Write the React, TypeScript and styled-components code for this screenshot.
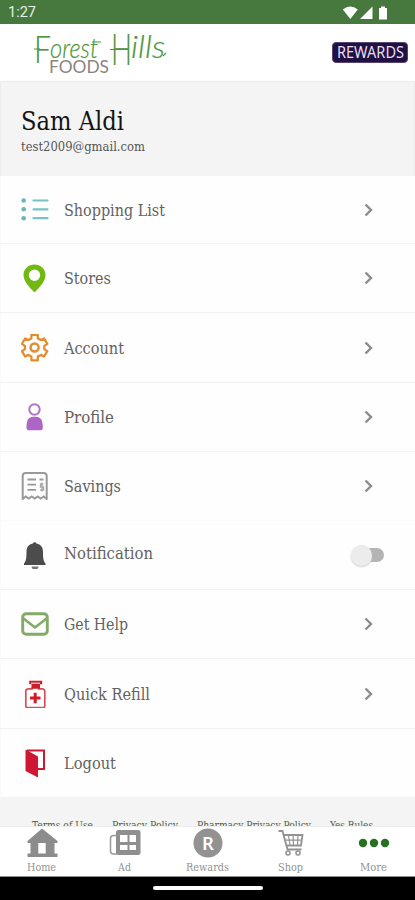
import React from "react";
import styled, { createGlobalStyle } from "styled-components";

const Global = createGlobalStyle`
  * { box-sizing: border-box; }
  body { margin: 0; background: #000; }
`;

const slab = `"DejaVu Serif Condensed", "DejaVu Serif", serif`;

const Screen = styled.div`
  width: 415px;
  height: 900px;
  display: flex;
  flex-direction: column;
  overflow: hidden;
  background: #fefefe;
  font-family: ${slab};
`;

const StatusBar = styled.div`
  height: 24px;
  flex: none;
  display: flex;
  align-items: center;
  justify-content: space-between;
  padding: 2px 26px 0 8px;
  background: #47783d;
  color: #e8f0e5;
  font: 400 14.5px/20px Roboto, sans-serif;
`;

const Header = styled.header`
  height: 57px;
  flex: none;
  display: flex;
  align-items: flex-start;
  justify-content: space-between;
  padding: 4px 7px 0 32px;
  background: #fff;
`;

const RewardsBadge = styled.div`
  width: 76px;
  height: 21px;
  margin-top: 14px;
  display: flex;
  align-items: center;
  justify-content: center;
  border: 1px solid #56456f;
  border-radius: 4px;
  background: #211044;
`;

const UserPanel = styled.section`
  height: 95px;
  flex: none;
  padding: 20px 21px 0 20px;
  background: #f4f4f4;
  border: solid #ececec;
  border-width: 1px 1px 0 1px;
`;

const Fit = styled.svg`
  display: block;
  flex: none;
  overflow: visible;
`;

const Menu = styled.div`
  height: 622px;
  flex: none;
  display: grid;
  grid-template-rows: 68px 69px 70px 69px 69px 69px 69px 70px 69px;
`;

const Row = styled.div<{ $faint?: boolean }>`
  display: flex;
  align-items: center;
  padding: 0 31px 0 21px;
  background: #fefefe;
  border-left: 1px solid #fafafa;
  border-bottom: 1px solid ${(p) => (p.$faint ? "#fbfbfb" : "#f2f2f2")};
`;

const IconSlot = styled.div`
  width: 28px;
  height: 28px;
  flex: none;
  margin-left: -1px;
  margin-right: 15px;
  svg { display: block; }
`;

const Label = styled.div<{ $raise?: boolean }>`
  flex: 1;
  margin-top: ${(p) => (p.$raise ? "-4px" : "0")};
`;

const Chevron = styled.svg`
  width: 10px;
  height: 14px;
  margin-right: 10px;
`;

const Toggle = styled.div`
  width: 33px;
  height: 22px;
  display: flex;
  align-items: center;
  &::before {
    content: "";
    width: 21px;
    height: 21px;
    flex: none;
    border-radius: 50%;
    background: #ececec;
    box-shadow: 0 1px 2px #ccc;
    z-index: 1;
  }
  &::after {
    content: "";
    width: 22px;
    height: 14px;
    flex: none;
    margin-left: -10px;
    border-radius: 7px;
    background: #b4b4b4;
  }
`;

const Links = styled.div`
  height: 28px;
  flex: none;
  display: flex;
  gap: 19px;
  padding: 20px 0 0 32px;
  overflow: hidden;
  background: #f4f4f4;
`;

const Tabs = styled.nav`
  height: 51px;
  flex: none;
  display: grid;
  grid-template-columns: repeat(5, 83px);
  background: #fff;
  border-top: 1px solid #ededed;
  border-bottom: 1px solid #8d8d8d;
`;

const Tab = styled.div`
  display: flex;
  flex-direction: column;
  align-items: center;
  justify-content: space-between;
  padding-bottom: 2px;
`;

const GestureBar = styled.div`
  flex: 1;
  padding-top: 9px;
  background: #000;
  &::before {
    content: "";
    display: block;
    width: 110px;
    height: 4px;
    margin: 0 auto;
    border-radius: 2px;
    background: #fff;
  }
`;

type FitProps = { text: string; width: number; size: number; color: string; family?: string; height?: number; weight?: number };

const FitText = ({ text, width, size, color, family = slab, height = size * 1.25, weight = 400 }: FitProps) => (
  <Fit width={width} height={height}>
    <text x="0" y={height * 0.78} fontFamily={family} fontSize={size} fontWeight={weight} fill={color} textLength={width} lengthAdjust="spacingAndGlyphs">
      {text}
    </text>
  </Fit>
);

const Svg = ({ children }: { children: React.ReactNode }) => (
  <svg width="28" height="28" viewBox="0 0 28 28" fill="none">{children}</svg>
);

const ListIcon = () => (
  <Svg>
    <g stroke="#78c1c4" strokeWidth="2.2" strokeLinecap="round"><path d="M12.500 4.500H26.500M12.500 13.300H26.500M12.500 22.200H26.500" /></g>
    <g fill="#68b6ba"><circle cx="2.700" cy="4.500" r="2.300" /><circle cx="2.700" cy="13.300" r="2.300" /><circle cx="2.700" cy="22.200" r="2.300" /></g>
  </Svg>
);

const PinIcon = () => (
  <Svg><path fillRule="evenodd" fill="#70b913" d="M13.500 .5C7.500.5 2.500 5 2.500 11c0 6.500 6 12.500 11 17.500 5-5 11-11 11-17.500C24.500 5 19.500.5 13.500.5Zm0 5.100a5.700 5.700 0 1 1 0 11.400a5.700 5.700 0 0 1 0-11.400Z" /></Svg>
);

const GearIcon = () => (
  <Svg>
    <g transform="translate(-.4 -.5)" stroke="#e58c2d">
      <path strokeWidth="2.300" strokeLinejoin="round" d="M10.800 1.300h6.400v3.600l3.100 1.700 3.200-1.600 3.200 5.400-3 2.100v3.100l3 2.100-3.200 5.300-3.200-1.600-3.100 1.700v3.700h-6.400v-3.700l-3.100-1.700L4.500 23l-3.200-5.300 3-2.100v-3.100l-3-2.100L4.500 5l3.200 1.600 3.100-1.700Z" />
      <circle cx="14" cy="14" r="4" strokeWidth="2.500" />
    </g>
  </Svg>
);

const ProfileIcon = () => (
  <Svg>
    <circle cx="13.500" cy="6.500" r="5.200" stroke="#b374c8" strokeWidth="2" />
    <path fill="#ad66c5" d="M5.500 24.500c0-7.500 2.200-10.800 6.500-10.800h3.200c4.300 0 6.600 3.300 6.600 10.800 0 1.900-.8 2.800-2.500 2.800H8c-1.700 0-2.500-.9-2.500-2.800Z" />
  </Svg>
);

const ReceiptIcon = () => (
  <Svg>
    <path stroke="#999" strokeWidth="2" d="M1.700 27V4c0-2 1-3 3-3h18c2 0 3 1 3 3v23l-3-2.500-3 2-3-2-3 2-3-2-3 2-3-2Z" />
    <path stroke="#999" strokeWidth="1.800" d="M6.500 7.500h8.500M6.500 12.700h8.500M6.500 17.800h8.500M18.500 7.500h4" />
    <path stroke="#aaa" strokeWidth="1.400" d="M22.500 12h-3v3h3v3h-3.500M21 10.500v9" />
  </Svg>
);

const BellIcon = () => (
  <Svg>
    <path fill="#4c4c4c" d="M11.900 2.500a1.900 1.900 0 0 1 3.600 0c4.500.9 6.500 4 6.500 8.300 0 6 .3 9.500 2.500 11.700v1.500H3v-1.500c2.200-2.200 2.500-5.700 2.500-11.700 0-4.300 1.900-7.400 6.400-8.300Z" />
    <path fill="#777" d="M10.500 25.500h7a3.500 3 0 0 1-7 0Z" />
  </Svg>
);

const MailIcon = () => (
  <Svg>
    <rect x="1.700" y="3.800" width="24.600" height="20.500" rx="3.500" stroke="#82aa69" strokeWidth="2.900" />
    <path d="m2.500 8.500 11.500 9L25.500 8.500" stroke="#82aa69" strokeWidth="2.500" strokeLinejoin="round" />
  </Svg>
);

const BottleIcon = () => (
  <Svg>
    <path stroke="#d4505a" strokeWidth="1.700" d="M11 7.500v1.300H7.500c-1.500 0-2.700 1-2.700 2.500V26c0 1 .5 1.500 1.500 1.500h16c1 0 1.500-.5 1.500-1.500V11.300c0-1.500-1-2.500-2.500-2.500h-3.500V7.500" />
    <path fill="#cf1c28" d="M8.200.700h13v3.500h-2.200v4.500h-8.500V4.200H8.200Z" />
    <path stroke="#fff" strokeWidth="1" d="M10 3.200h9" />
    <path stroke="#cf1c28" strokeWidth="3" d="M14.200 12.700v10.500M9 18h10.500" />
  </Svg>
);

const DoorIcon = () => (
  <Svg>
    <path stroke="#cf1734" strokeWidth="2" d="M6 1.500h17V20H16" />
    <path fill="#cf1734" d="m4.500.5 12.500 7v21L4.500 22Z" />
  </Svg>
);

const HomeIcon = () => (
  <svg width="32" height="31" viewBox="0 0 32 31">
    <path fill="#8c8c8c" d="M16 1.500 31.500 14v2h-3V26.500h3v3.500H1.500v-3.500H4.500V16h-3v-2Z" />
    <path fill="#fff" d="M12.300 16h7.400v10.500h-7.400Z" />
  </svg>
);

const AdIcon = () => (
  <svg width="32" height="31" viewBox="0 0 32 31" fill="none">
    <path stroke="#999" strokeWidth="1.500" d="M8 8.500H4.500C2.500 8.500 1.500 9.500 1.500 11.500V24c0 2 1 3 3 3H8" />
    <rect x="7" y="3" width="24.500" height="25" rx="2.500" fill="#8f8f8f" />
    <path fill="#fff" d="M11 8h7.500v7H11Zm9.500 0H27v7h-6.500ZM11 18h7.500v5H11Zm9.500 0H27v5h-6.500Z" />
  </svg>
);

const RewardIcon = () => (
  <svg width="32" height="31" viewBox="0 0 32 31">
    <circle cx="16" cy="16" r="14.500" fill="#929292" />
    <text x="16" y="22.500" textAnchor="middle" fontFamily="Noto Sans, sans-serif" fontSize="18.500" fontWeight="600" fill="#fff">R</text>
  </svg>
);

const CartIcon = () => (
  <svg width="32" height="31" viewBox="0 0 32 31" fill="none" stroke="#929292">
    <path strokeWidth="1.800" d="M3.500 4h4l5 18.500h14M9 8h18.500L26 18.500H11.500" />
    <path strokeWidth="1.200" d="M10 13.200h17M13.500 8l1.500 10.500M18 8l.5 10.500M23 8l-.5 10.500" />
    <circle cx="13" cy="26" r="2" strokeWidth="1.600" /><circle cx="23" cy="26" r="2" strokeWidth="1.600" />
  </svg>
);

const MoreIcon = () => (
  <svg width="32" height="31" viewBox="0 0 32 31" fill="#267020">
    <circle cx="5" cy="16" r="4.200" /><circle cx="16" cy="16" r="4.200" /><circle cx="27" cy="16" r="4.200" />
  </svg>
);

const items = [
  { label: "Shopping List", width: 100, Icon: ListIcon },
  { label: "Stores", width: 46, Icon: PinIcon },
  { label: "Account", width: 59, Icon: GearIcon },
  { label: "Profile", width: 49, Icon: ProfileIcon },
  { label: "Savings", width: 56, Icon: ReceiptIcon },
  { label: "Notification", width: 88, Icon: BellIcon, toggle: true },
  { label: "Get Help", width: 63, Icon: MailIcon },
  { label: "Quick Refill", width: 85, Icon: BottleIcon },
  { label: "Logout", width: 51, Icon: DoorIcon, plain: true },
];

const links: [string, number][] = [["Terms of Use", 61], ["Privacy Policy", 66], ["Pharmacy Privacy Policy", 114], ["Yes Rules", 43]];

const tabs = [
  { label: "Home", width: 29, Icon: HomeIcon },
  { label: "Ad", width: 13, Icon: AdIcon },
  { label: "Rewards", width: 43, Icon: RewardIcon },
  { label: "Shop", width: 25, Icon: CartIcon },
  { label: "More", width: 27, Icon: MoreIcon },
];

export default function App() {
  return (
    <Screen>
      <Global />
      <StatusBar>
        <span>1:27</span>
        <svg width="47" height="16" viewBox="0 0 47 16" fill="#fff">
          <path d="M.8 4.500q7.500-6 15 0L8.300 14ZM18 14 30.500 1.500V14ZM37 3h2V1.500h4V3h2v11.500h-8Z" />
        </svg>
      </StatusBar>
      <Header>
        <svg width="136" height="48" viewBox="0 0 136 48" fontFamily="Lato, sans-serif">
          <g fontWeight="300" fill="#4b973b" stroke="#4b973b" strokeWidth=".2">
            <text x="2" y="35" fontSize="37" textLength="17" lengthAdjust="spacingAndGlyphs">F</text>
            <text x="18" y="30" fontSize="28" fontStyle="italic" textLength="48" lengthAdjust="spacingAndGlyphs">orest</text>
            <text x="79" y="37" fontSize="44" textLength="21" lengthAdjust="spacingAndGlyphs">H</text>
            <text x="99" y="30" fontSize="32" fontStyle="italic" textLength="34" lengthAdjust="spacingAndGlyphs">ills</text>
          </g>
          <path d="M2 21h6M78 21.500h6M60 14h9M131 28l3-3" stroke="#4b973b" strokeWidth="1.200" />
          <text x="17" y="44.500" fontSize="16.500" fill="#8d8480" textLength="60" lengthAdjust="spacingAndGlyphs">FOODS</text>
        </svg>
        <RewardsBadge>
          <FitText text="REWARDS" width={67} size={15.500} color="#e5dfef" family="Noto Sans, sans-serif" />
        </RewardsBadge>
      </Header>
      <UserPanel>
        <FitText text="Sam Aldi" width={103} size={26.500} height={36} color="#141414" />
        <FitText text="test2009@gmail.com" width={124} size={12.500} height={17} color="#555" />
      </UserPanel>
      <Menu>
        {items.map(({ label, width, Icon, toggle, plain }) => (
          <Row key={label} $faint={label === "Savings"}>
            <IconSlot><Icon /></IconSlot>
            <Label $raise={toggle}><FitText text={label} width={width + 1} size={17.500} color="#626262" /></Label>
            {toggle && <Toggle />}
            {!toggle && !plain && (
              <Chevron viewBox="0 0 10 14" fill="none" stroke="#8b8b8b" strokeWidth="2.400"><path d="m1.500 1.500 5.500 5.500-5.500 5.500" /></Chevron>
            )}
          </Row>
        ))}
      </Menu>
      <Links>
        {links.map(([text, width]) => <FitText key={text} text={text} width={width} size={10.500} height={14} color="#4b5d47" />)}
      </Links>
      <Tabs>
        {tabs.map(({ label, width, Icon }) => (
          <Tab key={label}>
            <Icon />
            <FitText text={label} width={width} size={11.500} color="#929292" />
          </Tab>
        ))}
      </Tabs>
      <GestureBar />
    </Screen>
  );
}
